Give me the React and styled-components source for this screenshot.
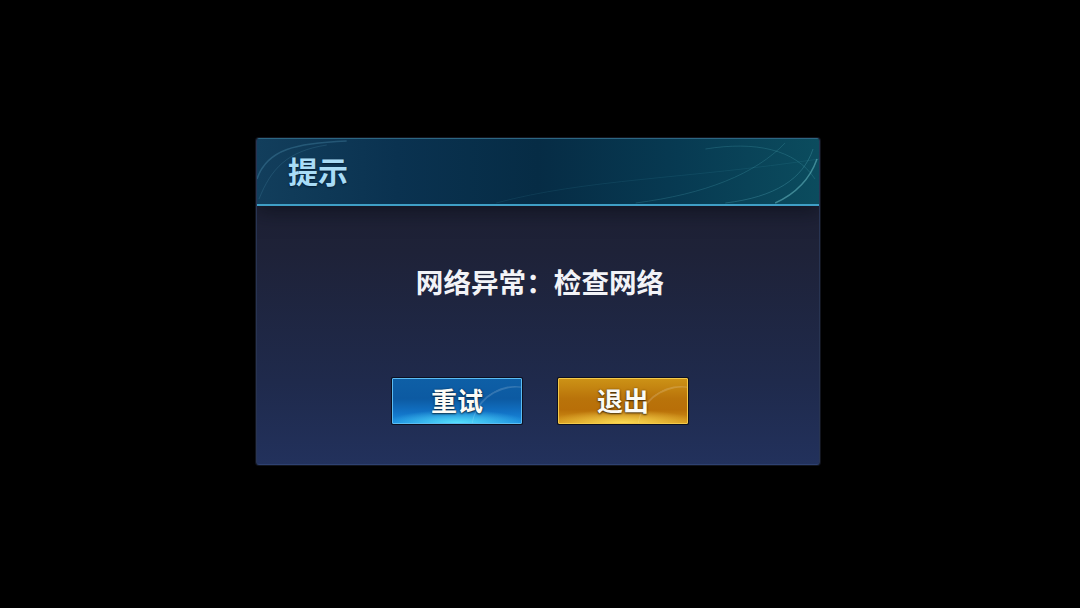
import React from 'react';
import styled, { createGlobalStyle } from 'styled-components';

const GlobalStyle = createGlobalStyle`
  html, body {
    margin: 0;
    padding: 0;
    background: #000;
  }
  body {
    font-family: "Noto Sans CJK SC", "Noto Sans", sans-serif;
  }
`;

const Screen = styled.div`
  width: 1080px;
  height: 608px;
  background: #000;
  display: flex;
  align-items: center;
  justify-content: center;
  padding: 0 4px 5px 0;
  box-sizing: border-box;
`;

const Dialog = styled.div`
  box-sizing: border-box;
  width: 564px;
  height: 327px;
  display: flex;
  flex-direction: column;
  border-radius: 3px;
  overflow: hidden;
  box-shadow: 0 0 0 1px #11141e;
  background: linear-gradient(180deg, #1e1f2f 0%, #1e2238 35%, #1f2a4c 75%, #22315c 100%);
  border-left: 1px solid #283452;
  border-right: 1px solid #283452;
  border-bottom: 1px solid #2e4170;
`;

const Header = styled.div`
  position: relative;
  height: 65px;
  flex: none;
  display: flex;
  align-items: center;
  padding-left: 31px;
  background: linear-gradient(90deg, #123e5c 0%, #0a3250 25%, #062c45 50%, #073a52 75%, #0b4c5e 100%);
  border-top: 1px solid #2d6682;
  border-bottom: 2px solid #3f9fc6;
  box-shadow: 0 6px 18px rgba(10, 12, 22, 0.55);
  overflow: hidden;
`;

const Swirl = styled.svg`
  position: absolute;
  inset: 0;
  width: 100%;
  height: 100%;
  pointer-events: none;
`;

const Title = styled.div`
  position: relative;
  font-size: 30px;
  font-weight: 700;
  color: #a9dcf6;
  margin-top: -4px;
  text-shadow: 0 1px 2px rgba(0, 20, 40, 0.8);
`;

const Body = styled.div`
  flex: 1;
  display: flex;
  flex-direction: column;
  align-items: center;
  padding-top: 62px;
`;

const Message = styled.div`
  font-size: 27.6px;
  line-height: 30px;
  font-weight: 700;
  color: #f2f3f7;
  margin-left: 4px;
  margin-top: -2px;
`;

const Buttons = styled.div`
  display: flex;
  gap: 36px;
  margin-top: 82px;
  margin-left: 4px;
`;

const Button = styled.button`
  position: relative;
  width: 130px;
  height: 46px;
  padding: 0;
  border: 1px solid ${({ $tone }) => ($tone === 'gold' ? '#f3c948' : '#5cbcf2')};
  border-radius: 1px;
  font-family: inherit;
  font-size: 26px;
  font-weight: 700;
  color: #fbfbf6;
  text-shadow: 0 1px 2px rgba(0, 0, 0, 0.6), 0 0 2px rgba(0, 0, 0, 0.4);
  box-shadow: 0 0 0 1px #0d1020;
  overflow: hidden;
  background: ${({ $tone }) =>
    $tone === 'gold'
      ? 'radial-gradient(ellipse 60% 30% at 50% 100%, rgba(255, 226, 90, 0.9), rgba(255, 200, 40, 0) 100%), linear-gradient(180deg, #cc9216 0%, #b9730a 45%, #b86f08 70%, #d4961a 100%)'
      : 'radial-gradient(ellipse 55% 30% at 50% 100%, rgba(90, 230, 255, 0.95), rgba(40, 170, 255, 0) 100%), linear-gradient(180deg, #0e5fa6 0%, #0c5aa2 45%, #1171c4 75%, #1a8ee0 100%)'};
  &::before {
    content: '';
    position: absolute;
    left: -20px;
    top: -30px;
    width: 90px;
    height: 80px;
    border-radius: 50%;
    border-top: 2px solid rgba(255, 255, 255, 0.18);
    transform: rotate(-22deg);
  }
  &::after {
    content: '';
    position: absolute;
    right: -30px;
    bottom: -36px;
    width: 80px;
    height: 70px;
    border-radius: 50%;
    border-top: 2px solid rgba(255, 255, 255, 0.16);
    transform: rotate(-30deg);
  }
`;

const Label = styled.span`
  position: relative;
  z-index: 1;
  display: block;
  line-height: 44px;
  margin-top: -3px;
`;

const App = () => {
  return (
    <>
      <GlobalStyle />
      <Screen>
        <Dialog>
          <Header>
            <Swirl viewBox="0 0 564 65" preserveAspectRatio="none">
              <path d="M0 40 C 10 10, 40 4, 90 2" stroke="rgba(120,200,230,0.22)" strokeWidth="1.5" fill="none" />
              <path d="M2 60 C 14 30, 30 12, 70 6" stroke="rgba(120,200,230,0.15)" strokeWidth="1" fill="none" />
              <path d="M240 64 C 330 40, 430 40, 564 20" stroke="rgba(90,190,210,0.1)" strokeWidth="1" fill="none" />
              <path d="M380 64 C 450 55, 500 35, 530 4" stroke="rgba(110,210,220,0.18)" strokeWidth="1" fill="none" />
              <path d="M450 10 C 500 2, 540 10, 560 40" stroke="rgba(110,210,220,0.18)" strokeWidth="1" fill="none" />
              <path d="M520 64 C 540 55, 555 40, 562 20" stroke="rgba(140,230,235,0.4)" strokeWidth="1.5" fill="none" />
              <path d="M470 64 C 520 58, 548 40, 558 10" stroke="rgba(120,220,230,0.22)" strokeWidth="1" fill="none" />
            </Swirl>
            <Title>提示</Title>
          </Header>
          <Body>
            <Message>网络异常：检查网络</Message>
            <Buttons>
              <Button $tone="blue">
                <Label>重试</Label>
              </Button>
              <Button $tone="gold">
                <Label>退出</Label>
              </Button>
            </Buttons>
          </Body>
        </Dialog>
      </Screen>
    </>
  );
};

export default App;
